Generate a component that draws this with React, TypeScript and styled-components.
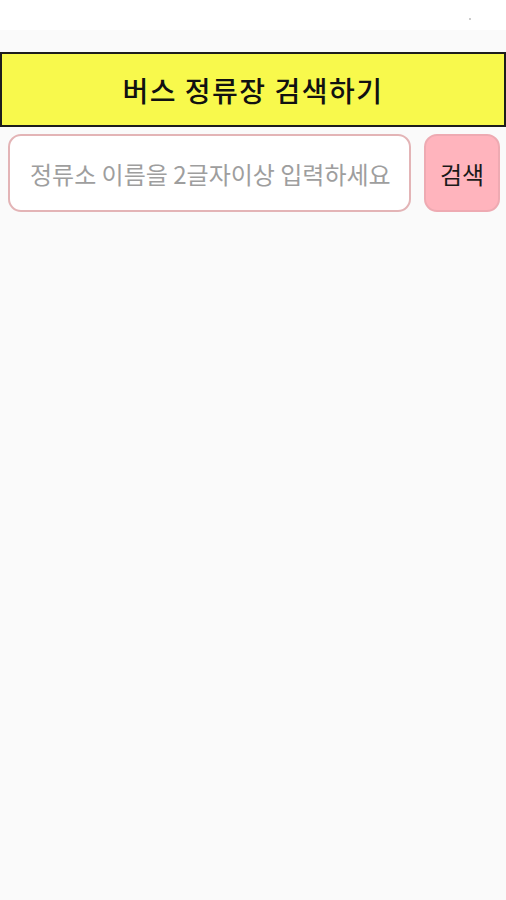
import React from "react";
import styled, { createGlobalStyle } from "styled-components";

const Global = createGlobalStyle`
  html, body { margin: 0; padding: 0; background: #fafafa; }
  body { font-family: "Noto Sans CJK KR", "Noto Sans", sans-serif; }
`;

const Screen = styled.div`
  width: 506px;
  height: 900px;
  background: #fafafa;
  display: flex;
  flex-direction: column;
`;

const StatusBar = styled.div`
  height: 30px;
  background: #ffffff;
  position: relative;
`;

const Dot = styled.span`
  position: absolute;
  left: 469px;
  top: 18px;
  width: 2px;
  height: 2px;
  background: #bbb;
  border-radius: 1px;
`;

const Header = styled.div`
  margin-top: 22px;
  height: 71px;
  background: #f8f94c;
  border: 2px solid #1d1d1d;
  display: flex;
  align-items: center;
  justify-content: center;
`;

const Title = styled.h1`
  margin: 0;
  font-size: 28px;
  font-weight: 500;
  color: #111;
  letter-spacing: 1.5px;
`;

const SearchRow = styled.div`
  display: flex;
  align-items: stretch;
  gap: 13px;
  padding: 7px 6px 0 8px;
  height: 78px;
`;

const Input = styled.input`
  flex: 1;
  min-width: 0;
  box-sizing: border-box;
  border: 2px solid #e3b4b6;
  border-radius: 13px;
  background: #fff;
  padding: 0 12px 0 20px;
  font-family: "Noto Sans CJK KR", "Noto Sans", sans-serif;
  font-size: 24px;
  color: #333;
  outline: none;
  &::placeholder { color: #9e9e9e; }
`;

const Button = styled.button`
  width: 76px;
  box-sizing: border-box;
  border: 2px solid #eeaab2;
  border-radius: 13px;
  background: #ffb4bd;
  font-family: "Noto Sans CJK KR", "Noto Sans", sans-serif;
  font-size: 24px;
  color: #1a1a1a;
  padding: 0;
`;

export default function App() {
  return (
    <>
      <Global />
      <Screen>
        <StatusBar>
          <Dot />
        </StatusBar>
        <Header>
          <Title>버스 정류장 검색하기</Title>
        </Header>
        <SearchRow>
          <Input placeholder="정류소 이름을 2글자이상 입력하세요" />
          <Button>검색</Button>
        </SearchRow>
      </Screen>
    </>
  );
}
